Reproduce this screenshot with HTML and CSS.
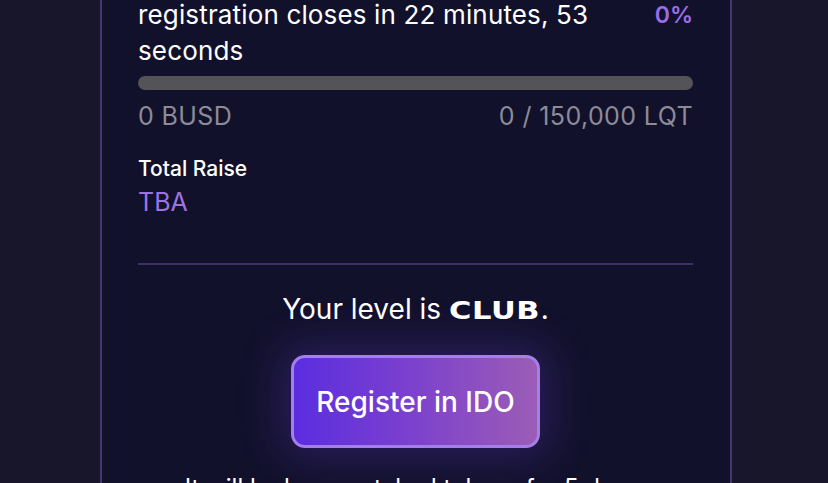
FILE: index.html
```html
<!DOCTYPE html>
<html>
<head>
<meta charset="utf-8">
<link rel="stylesheet" href="styles.css">
</head>
<body>
<div class="page">
  <section class="card">
    <div class="status-row">
      <p class="status">registration closes in 22 minutes, 53 seconds</p>
      <span class="percent">0%</span>
    </div>
    <div class="progress"><div class="progress-fill" style="width:0%"></div></div>
    <div class="amounts">
      <span>0 BUSD</span>
      <span>0 / 150,000 LQT</span>
    </div>
    <div class="raise">
      <div class="raise-label">Total Raise</div>
      <div class="raise-value">TBA</div>
    </div>
    <hr class="divider">
    <div class="level">
      <p class="level-text">Your level is <strong class="level-name">CLUB</strong>.</p>
      <button class="register">Register in IDO</button>
      <p class="note">It will lock your staked tokens for 5 days.</p>
    </div>
  </section>
</div>
</body>
</html>
```
FILE: styles.css
```css
html, body {
  margin: 0;
  padding: 0;
  background: #17162b;
  overflow: hidden;
}
body {
  font-family: Inter, "Noto Sans", sans-serif;
  color: #ffffff;
}
.page {
  width: 828px;
  height: 483px;
  overflow: hidden;
}
.card {
  box-sizing: border-box;
  width: 632px;
  margin: -40px 0 0 100px;
  padding: 35px 37px 40px 36px;
  background: #12112c;
  border: 2px solid #453676;
}
.status-row {
  display: flex;
  justify-content: space-between;
  align-items: flex-start;
  gap: 30px;
}
.status {
  margin: 0;
  font-size: 26px;
  line-height: 36px;
  font-weight: 400;
  letter-spacing: 0.15px;
  max-width: 470px;
}
.percent {
  font-size: 23px;
  line-height: 36px;
  font-weight: 600;
  color: #9a6ee6;
}
.progress {
  margin-top: 7px;
  height: 14px;
  border-radius: 7px;
  background: #545358;
  overflow: hidden;
}
.progress-fill {
  height: 100%;
  background: #9a6ee6;
}
.amounts {
  display: flex;
  justify-content: space-between;
  margin-top: 10px;
  font-size: 25px;
  line-height: 32px;
  letter-spacing: 0.4px;
  color: #8c8b96;
}
.raise {
  margin-top: 23px;
}
.raise-label {
  font-size: 21px;
  line-height: 28px;
  font-weight: 500;
}
.raise-value {
  margin-top: 4px;
  font-size: 25px;
  line-height: 30px;
  color: #9c74e2;
}
.divider {
  margin: 46px 0 0 0;
  border: 0;
  height: 2px;
  background: #3b3262;
}
.level {
  display: flex;
  flex-direction: column;
  align-items: center;
}
.level-text {
  margin: 27px 0 0 0;
  font-size: 28px;
  line-height: 34px;
}
.level-name {
  display: inline-block;
  font-family: "DejaVu Sans", sans-serif;
  font-size: 25px;
  font-weight: 700;
  letter-spacing: 0.5px;
  transform: scaleX(1.22);
  transform-origin: left center;
  margin-right: 17px;
}
.register {
  margin-top: 27px;
  box-sizing: border-box;
  width: 249px;
  height: 93px;
  border: 3px solid #a47fec;
  border-radius: 14px;
  background: linear-gradient(90deg, #5a2ddf 0%, #7a3fcf 45%, #9b5db6 100%);
  color: #ffffff;
  font-family: Inter, "Noto Sans", sans-serif;
  font-size: 28px;
  font-weight: 500;
  box-shadow: 0 0 40px 10px rgba(98, 60, 200, 0.3);
}
.note {
  margin: 25px 0 0 0;
  font-size: 24px;
  line-height: 30px;
}
```
